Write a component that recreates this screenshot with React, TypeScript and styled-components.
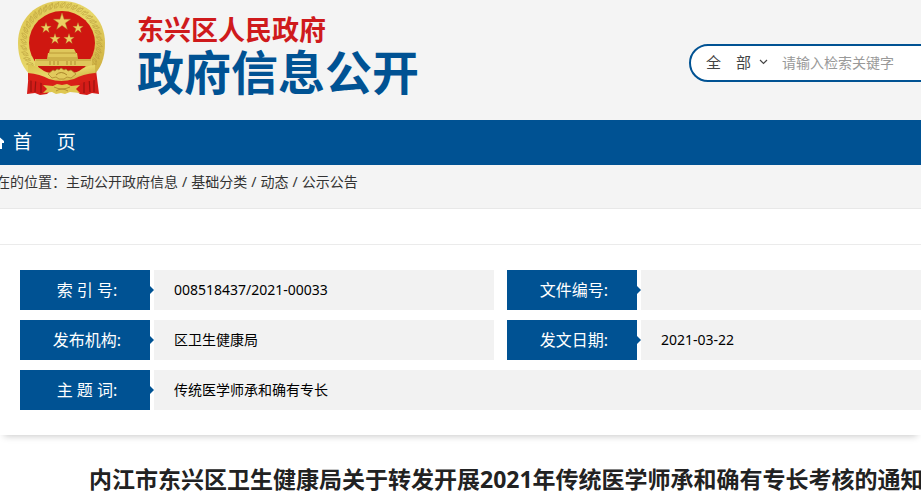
import React from 'react';
import styled, { createGlobalStyle } from 'styled-components';

const blue = '#005293';

const GlobalStyle = createGlobalStyle`
  * { box-sizing: border-box; }
  body {
    margin: 0;
    overflow: hidden;
    background: #fff;
    color: #333;
    font-family: "Noto Sans", "Noto Sans CJK SC", sans-serif;
    font-size: 14px;
  }
`;

const Header = styled.header`
  display: flex;
  align-items: flex-start;
  height: 120px;
  padding-left: 16px;
  overflow: hidden;
  background: #f4f4f4;
`;

const Emblem = styled.svg`
  flex: none;
  width: 92px;
  height: 98px;
`;

const Brand = styled.a`
  flex: none;
  margin-left: 29px;
  padding-top: 15px;
  text-decoration: none;
  font-weight: 700;
`;

const Region = styled.span`
  display: block;
  color: #cf1a1c;
  font-size: 27px;
  line-height: 30px;
`;

const SiteName = styled.span`
  display: block;
  color: ${blue};
  font-size: 47px;
  line-height: 54px;
`;

const Search = styled.form`
  display: flex;
  flex: none;
  align-items: center;
  width: 300px;
  height: 38px;
  margin: 44px -68px 0 auto;
  padding: 0 0 2px 15px;
  border: 2px solid ${blue};
  border-radius: 19px;
  background: #fff;
`;

const ScopeField = styled.label`
  display: flex;
  align-items: center;
  gap: 7px;
`;

const Scope = styled.select`
  appearance: none;
  width: 46px;
  padding: 0;
  border: 0;
  background: transparent;
  color: #444;
  font: inherit;
  font-size: 15px;
`;

const Keyword = styled.input`
  flex: 1;
  min-width: 0;
  margin-left: 14px;
  padding: 0;
  border: 0;
  outline: 0;
  background: transparent;
  font: inherit;
  &::placeholder { color: #999; opacity: 1; }
`;

const Nav = styled.nav`
  height: 45px;
  overflow: hidden;
  background: ${blue};
`;

const NavLink = styled.a`
  display: flex;
  align-items: center;
  gap: 9px;
  height: 42px;
  margin-left: -14px;
  color: #fff;
  font-size: 19px;
  white-space: pre;
  text-decoration: none;
`;

const Crumbs = styled.nav`
  height: 44px;
  margin-left: -4px;
  line-height: 33px;
  border-bottom: 1px solid #e8e8e8;
  background: #f4f4f4;
  white-space: nowrap;
`;

const Crumb = styled.a`
  color: inherit;
  text-decoration: none;
  & + &::before {
    content: "/";
    margin: 0 4px;
  }
`;

const Strip = styled.div`
  height: 36px;
  border-bottom: 1px solid #ebebeb;
`;

const InfoPanel = styled.dl`
  display: grid;
  grid-template-columns: 474px 1fr;
  gap: 10px 13px;
  margin: 0;
  padding: 25px 0 25px 20px;
  box-shadow: 0 5px 7px -4px rgba(0, 0, 0, 0.22);
`;

const Field = styled.div<{ $wide?: boolean }>`
  display: flex;
  gap: 4px;
  height: 40px;
  grid-column: ${(p) => (p.$wide ? '1 / -1' : 'auto')};
  line-height: 40px;
`;

const FieldName = styled.dt`
  position: relative;
  flex: none;
  width: 130px;
  padding-left: 4px;
  background: ${blue};
  color: #fff;
  font-size: 16px;
  text-align: center;
  &::after {
    content: "";
    position: absolute;
    top: 16px;
    left: 100%;
    border: 4px solid transparent;
    border-left-color: ${blue};
    border-right-width: 0;
  }
`;

const FieldValue = styled.dd`
  flex: 1;
  margin: 0;
  padding-left: 20px;
  background: #f2f2f2;
  color: #000;
`;

const Title = styled.h1`
  margin: 27px 0 0 89px;
  color: #222;
  font-size: 23px;
  line-height: 34px;
  white-space: nowrap;
`;

const starPath = 'M0-10 2.3-3.1H9.5L3.7 1.2 5.9 8.1 0 3.8-5.9 8.1-3.7 1.2-9.5-3.1H-2.3Z';
const stars = [
  { x: 46, y: 22, s: 0.9 },
  { x: 30, y: 28, s: 0.55 },
  { x: 62, y: 28, s: 0.55 },
  { x: 39, y: 39, s: 0.55 },
  { x: 53, y: 39, s: 0.55 },
];
const grains = Array.from({ length: 30 }, (_, i) => 140 + i * 9);

function NationalEmblem() {
  return (
    <Emblem viewBox="0 0 92 98" role="img" aria-label="国徽">
      <defs>
        <linearGradient id="gold" x1="0" y1="0" x2="1" y2="1">
          <stop offset="0" stopColor="#dcc450" />
          <stop offset="0.5" stopColor="#e8d869" />
          <stop offset="1" stopColor="#c9a737" />
        </linearGradient>
      </defs>
      <path d="M13 70 11 94l8-1 5 2 7-1 3-3h26l4 3 7 1 5-2 7 1-3-24Z" fill="#d51c18" />
      <path d="M15 76v16M20 77l-1 15M25 79v14M68 79v14M73 77l1 15M78 76v16" stroke="#99130f" strokeWidth="1.2" />
      <path d="M45.500 1C20 1 2 19 2 43c0 15 5 27 15 34l15 5h28l15-5c10-7 14-19 14-34C89 19 71 1 45.500 1Z" fill="url(#gold)" />
      <g fill="none" stroke="#b39536" strokeWidth="0.8" opacity="0.6">
        {grains.map((a) => (
          <path key={a} transform={`translate(45.5 43) rotate(${a})`} d="M35-3q3-1 6 3q-4 1-6-3m0 4q4 0 5 3" />
        ))}
      </g>
      <ellipse cx="46" cy="43" rx="33" ry="32" fill="#cf1710" />
      <path d="M18 59h56l-8 13-12 5H38l-13-5Z" fill="#c8160f" />
      {stars.map((p) => (
        <path key={`${p.x}-${p.y}`} transform={`translate(${p.x} ${p.y}) scale(${p.s})`} d={starPath} fill="#ebcf61" stroke="#b18a30" strokeWidth="0.5" />
      ))}
      <path d="M34 49h24l2 4h1l1 6h14v7H19v-7h12l1-6h1Z" fill="#dfc75b" />
      <path d="M33 53h27M31 58h31M20 60h55" stroke="#b3912f" strokeWidth="0.8" />
      <path d="M34 61v4m4-4v4m4-4v4m9-4v4m4-4v4m4-4v4" stroke="#b08d31" />
      <path d="M12 65q9 0 16 6 5 3 9 1l4 7q-8 3-15-1-8-4-14-5ZM79 65q-9 0-16 6-5 3-9 1l-4 7q8 3 15-1 8-4 14-5Z" fill="url(#gold)" />
      <path d="m32 74 5-4 2 1 2-2 2 1 2-2 3 2 2-1 2 2 3-1 5 4-5 4-4-1-3 2h-5l-3-2-4 1Z" fill="#e2ca5d" stroke="#a98329" strokeWidth="0.7" />
      <path d="M40 75q5-5 11 0" fill="none" stroke="#a98329" />
      <path d="M12 73q12 1 21 6 12 4 25 0 9-5 21-6v7q-10 1-19 5-14 5-29 0-9-4-19-5Z" fill="#d92018" />
      <path d="m27 85 10 1 4-2 5 1 5-1 4 2 9-1-4 4 4 4-10-1-5 2-4-1-5 1-4-2-9 1 4-4Z" fill="#dfc750" />
      <path d="M38 87q8 4 16 0M40 91q6-4 12 0" fill="none" stroke="#a98329" strokeWidth="0.8" />
    </Emblem>
  );
}

export default function App() {
  return (
    <>
      <GlobalStyle />
      <Header>
        <NationalEmblem />
        <Brand href="#">
          <Region>东兴区人民政府</Region>
          <SiteName>政府信息公开</SiteName>
        </Brand>
        <Search role="search">
          <ScopeField>
            <Scope aria-label="检索范围"><option>全　部</option></Scope>
            <svg width="9" height="6" viewBox="0 0 9 6" aria-hidden="true">
              <path d="M1 1 4.500 4.500 8 1" fill="none" stroke="#444" strokeWidth="1.200" />
            </svg>
          </ScopeField>
          <Keyword aria-label="检索关键字" placeholder="请输入检索关键字" />
        </Search>
      </Header>
      <Nav>
        <NavLink href="#">
          <svg width="18" height="18" viewBox="0 0 18 18" aria-hidden="true">
            <path d="M9 1 18 9v2h-2v6h-5v-5H7v5H2v-6H0V9Z" fill="#fff" />
          </svg>
          {'首     页'}
        </NavLink>
      </Nav>
      <Crumbs aria-label="位置">
        在的位置：
        <Crumb href="#">主动公开政府信息</Crumb>
        <Crumb href="#">基础分类</Crumb>
        <Crumb href="#">动态</Crumb>
        <Crumb href="#">公示公告</Crumb>
      </Crumbs>
      <Strip />
      <main>
        <InfoPanel>
          <Field><FieldName>索 引 号:</FieldName><FieldValue>008518437/2021-00033</FieldValue></Field>
          <Field><FieldName>文件编号:</FieldName><FieldValue /></Field>
          <Field><FieldName>发布机构:</FieldName><FieldValue>区卫生健康局</FieldValue></Field>
          <Field><FieldName>发文日期:</FieldName><FieldValue>2021-03-22</FieldValue></Field>
          <Field $wide><FieldName>主 题 词:</FieldName><FieldValue>传统医学师承和确有专长</FieldValue></Field>
        </InfoPanel>
        <Title>内江市东兴区卫生健康局关于转发开展2021年传统医学师承和确有专长考核的通知</Title>
      </main>
    </>
  );
}
